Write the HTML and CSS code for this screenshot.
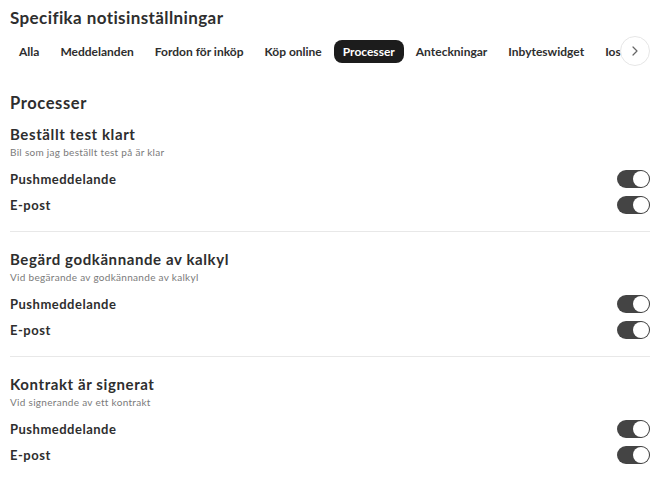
FILE: index.html
```html
<!DOCTYPE html>
<html lang="sv">
<head>
    <meta charset="UTF-8">
    <meta name="viewport" content="width=device-width, initial-scale=1.0">
    <title>Notisinställningar</title>
    <link rel="stylesheet" href="styles.css">
</head>
<body>
    <div class="page">
        <h1 class="title">Specifika notisinställningar</h1>

        <div class="tabs-wrap">
            <div class="tabs">
                <span class="tab">Alla</span>
                <span class="tab">Meddelanden</span>
                <span class="tab">Fordon för inköp</span>
                <span class="tab">Köp online</span>
                <span class="tab active">Processer</span>
                <span class="tab">Anteckningar</span>
                <span class="tab">Inbyteswidget</span>
                <span class="tab">Ios</span>
            </div>
            <button class="scroll-btn" aria-label="Nästa">
                <svg width="12" height="12" viewBox="0 0 12 12"><path d="M4 2l4 4-4 4" fill="none" stroke="#666" stroke-width="1.2" stroke-linecap="round" stroke-linejoin="round"/></svg>
            </button>
        </div>

        <h2 class="group-title">Processer</h2>

        <div class="section">
            <h3 class="section-title">Beställt test klart</h3>
            <p class="section-desc">Bil som jag beställt test på är klar</p>
            <div class="row"><span>Pushmeddelande</span><span class="toggle on"></span></div>
            <div class="row"><span>E-post</span><span class="toggle on"></span></div>
        </div>

        <div class="section">
            <h3 class="section-title">Begärd godkännande av kalkyl</h3>
            <p class="section-desc">Vid begärande av godkännande av kalkyl</p>
            <div class="row"><span>Pushmeddelande</span><span class="toggle on"></span></div>
            <div class="row"><span>E-post</span><span class="toggle on"></span></div>
        </div>

        <div class="section">
            <h3 class="section-title">Kontrakt är signerat</h3>
            <p class="section-desc">Vid signerande av ett kontrakt</p>
            <div class="row"><span>Pushmeddelande</span><span class="toggle on"></span></div>
            <div class="row"><span>E-post</span><span class="toggle on"></span></div>
        </div>
    </div>
</body>
</html>
```

FILE: styles.css
```css
body {
    margin: 0;
    padding: 0;
    font-family: Lato, "Noto Sans", sans-serif;
    color: #2e2e2e;
    background: #fff;
}
.page {
    padding: 0 20px 0 10px;
}
.title {
    margin: 0;
    padding-top: 7px;
    font-size: 17px;
    font-weight: 700;
    line-height: 22px;
    letter-spacing: 0.4px;
}
.tabs-wrap {
    position: relative;
    margin-top: 7px;
    height: 30px;
    overflow: hidden;
}
.tabs {
    display: flex;
    gap: 3px;
    align-items: center;
    height: 30px;
    white-space: nowrap;
}
.tab {
    padding: 0 9px;
    height: 23px;
    line-height: 23px;
    border-radius: 8px;
    font-size: 12px;
    font-weight: 700;
    letter-spacing: 0;
}
.tab.active {
    background: #1c1c1c;
    color: #fff;
}
.scroll-btn {
    position: absolute;
    right: 0;
    top: 0;
    width: 30px;
    height: 30px;
    padding: 0;
    border: 1px solid #e6e6e6;
    border-radius: 50%;
    background: #fff;
    display: flex;
    align-items: center;
    justify-content: center;
}
.group-title {
    margin: 27px 0 0;
    font-size: 16.5px;
    font-weight: 700;
    line-height: 20px;
    letter-spacing: 0.6px;
}
.section {
    padding: 12px 0 13px;
}
.section + .section {
    border-top: 1px solid #e8e8e8;
    padding-top: 18px;
}
.section-title {
    margin: 0;
    font-size: 15px;
    font-weight: 700;
    line-height: 18px;
    letter-spacing: 0.6px;
}
.section-desc {
    margin: 2px 0 0;
    font-size: 10px;
    color: #7a7a7a;
    line-height: 14px;
    letter-spacing: 0.3px;
}
.row {
    display: flex;
    justify-content: space-between;
    align-items: center;
    height: 26px;
    font-size: 13px;
    font-weight: 700;
    letter-spacing: 0.5px;
}
.section-desc + .row {
    margin-top: 7px;
}
.toggle {
    width: 33px;
    height: 18px;
    border-radius: 9px;
    background: #444;
    display: flex;
    align-items: center;
    justify-content: flex-end;
    padding: 0 1px;
    box-sizing: border-box;
}
.toggle::after {
    content: "";
    width: 16px;
    height: 16px;
    border-radius: 50%;
    background: #fff;
    box-shadow: 0 0 0 0.5px #444;
}
```
